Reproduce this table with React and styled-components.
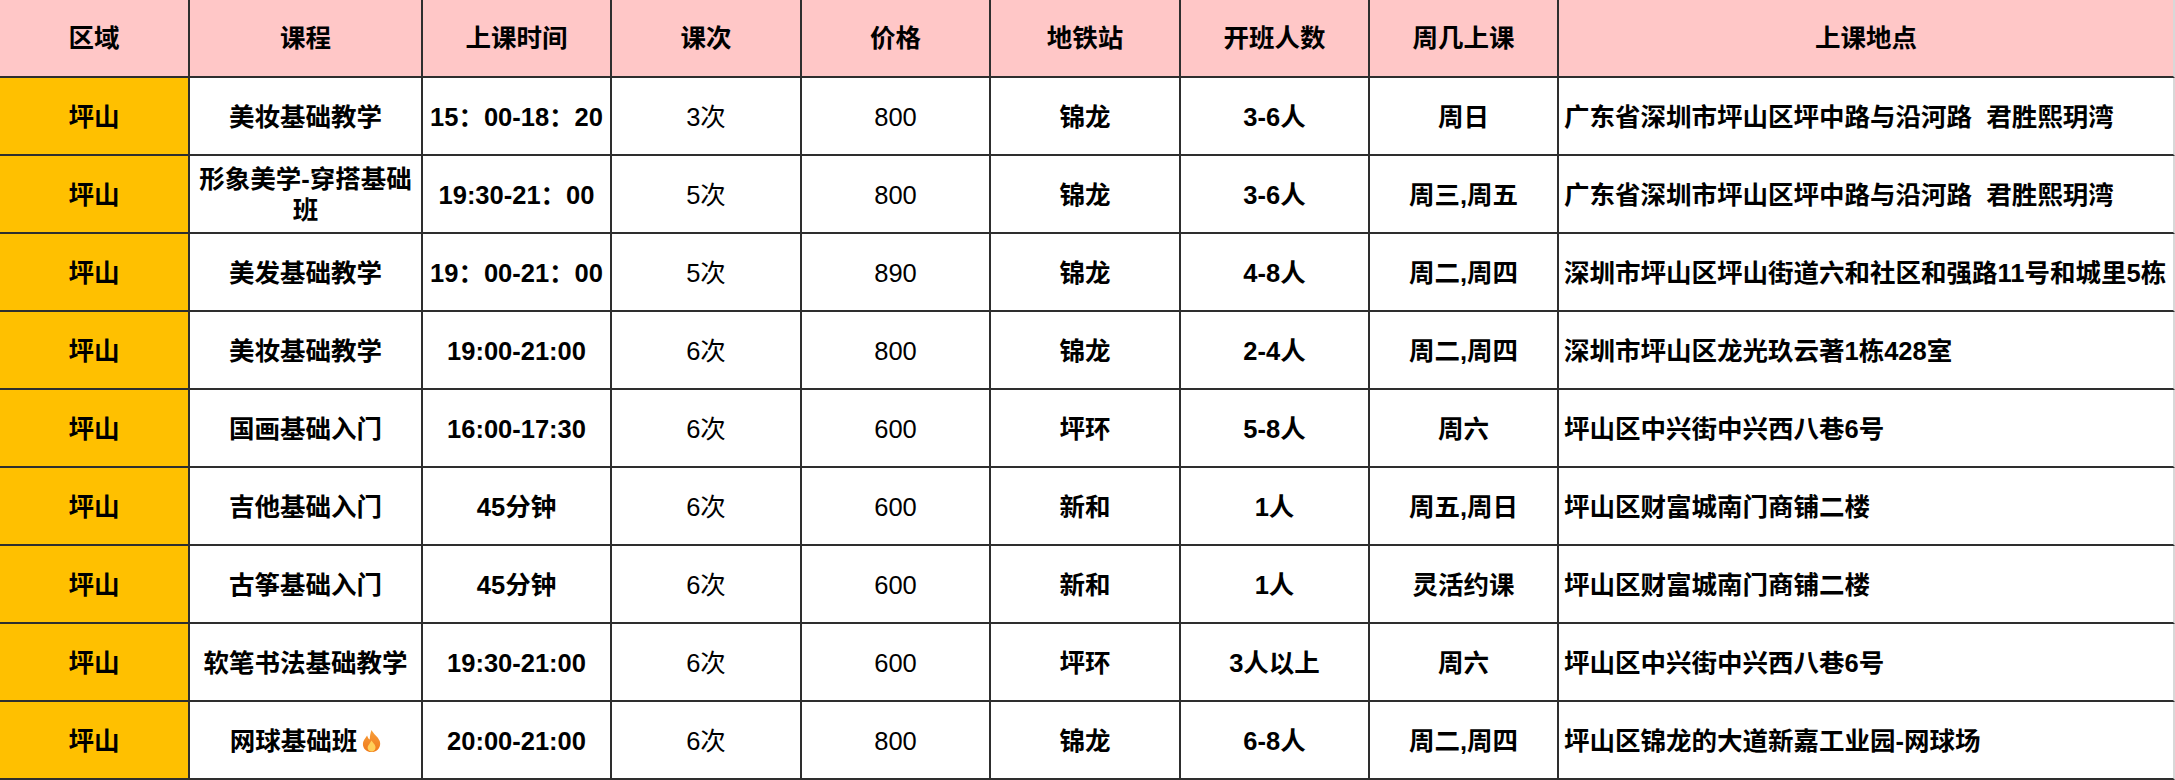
import React from 'react'
import styled, { createGlobalStyle } from 'styled-components'

const GlobalStyle = createGlobalStyle`
    html, body {
        margin: 0;
        padding: 0;
        background: #fff;
    }
    body {
        font-family: "Liberation Sans", "Noto Sans CJK SC", sans-serif;
        color: #000;
    }
`

const Table = styled.div`
    width: 2175px;
    height: 780px;
    display: grid;
    grid-template-columns: 190px 233px 189px 190px 189px 190px 189px 189px 1fr;
    grid-auto-rows: 78px;
    overflow: hidden;
`

const Cell = styled.div`
    box-sizing: border-box;
    display: flex;
    align-items: center;
    justify-content: ${(p) => (p.left ? 'flex-start' : 'center')};
    text-align: ${(p) => (p.left ? 'left' : 'center')};
    padding: ${(p) => (p.left ? '2px 0 0 5px' : '2px 3px 0')};
    border-right: 2px solid ${(p) => (p.last ? '#d8d8d8' : '#2e2e2e')};
    border-bottom: 2px solid #2e2e2e;
    background: ${(p) => p.bg || '#fff'};
    font-size: 25.5px;
    line-height: 31px;
    font-weight: ${(p) => (p.light ? 400 : 700)};
    white-space: ${(p) => (p.left ? 'nowrap' : 'normal')};
`

const HeadCell = styled(Cell)`
    background: #ffc7c7;
    font-weight: 700;
    padding-top: 0;
`

const Flame = styled.svg`
    display: inline-block;
    width: 19px;
    height: 24px;
    margin-left: 5px;
    vertical-align: -3px;
`

const FlameIcon = () => (
    <Flame viewBox="0 0 18 22">
        <defs>
            <linearGradient id="fl" x1="0" y1="0" x2="0" y2="1">
                <stop offset="0" stopColor="#f7a03a" />
                <stop offset="1" stopColor="#f0781c" />
            </linearGradient>
        </defs>
        <path
            d="M9 0.5 C10.5 4 15 6.5 16.8 11 C18.6 16.5 14.5 21.5 9 21.5 C3.5 21.5 -0.5 16.8 1.3 11.5 C2.2 9 4 7.5 4.8 5.8 C5.6 8 6.3 9 7.3 9.6 C7.5 6.5 7.8 3.5 9 0.5 Z"
            fill="url(#fl)"
        />
        <path
            d="M9 10.5 C10.5 13 13 14.5 12.8 17.3 C12.6 19.6 11 21 9 21 C7 21 5.3 19.6 5.3 17.5 C5.3 15 7.7 13.5 9 10.5 Z"
            fill="#ffcf5a"
        />
    </Flame>
)

const headers = ['区域', '课程', '上课时间', '课次', '价格', '地铁站', '开班人数', '周几上课', '上课地点']

const rows = [
    ['美妆基础教学', '15：00-18：20', '3次', '800', '锦龙', '3-6人', '周日', '广东省深圳市坪山区坪中路与沿河路\u00a0\u00a0君胜熙玥湾'],
    ['形象美学-穿搭基础班', '19:30-21：00', '5次', '800', '锦龙', '3-6人', '周三,周五', '广东省深圳市坪山区坪中路与沿河路\u00a0\u00a0君胜熙玥湾'],
    ['美发基础教学', '19：00-21：00', '5次', '890', '锦龙', '4-8人', '周二,周四', '深圳市坪山区坪山街道六和社区和强路11号和城里5栋'],
    ['美妆基础教学', '19:00-21:00', '6次', '800', '锦龙', '2-4人', '周二,周四', '深圳市坪山区龙光玖云著1栋428室'],
    ['国画基础入门', '16:00-17:30', '6次', '600', '坪环', '5-8人', '周六', '坪山区中兴街中兴西八巷6号'],
    ['吉他基础入门', '45分钟', '6次', '600', '新和', '1人', '周五,周日', '坪山区财富城南门商铺二楼'],
    ['古筝基础入门', '45分钟', '6次', '600', '新和', '1人', '灵活约课', '坪山区财富城南门商铺二楼'],
    ['软笔书法基础教学', '19:30-21:00', '6次', '600', '坪环', '3人以上', '周六', '坪山区中兴街中兴西八巷6号'],
    ['网球基础班', '20:00-21:00', '6次', '800', '锦龙', '6-8人', '周二,周四', '坪山区锦龙的大道新嘉工业园-网球场', true],
]

const App = () => {
    return (
        <>
            <GlobalStyle />
            <Table>
                {headers.map((h, i) => (
                    <HeadCell key={h} last={i === headers.length - 1}>{h}</HeadCell>
                ))}
                {rows.map((r, idx) => (
                    <React.Fragment key={idx}>
                        <Cell bg="#ffc000">坪山</Cell>
                        <Cell>
                            <span>
                                {r[0]}
                                {r[8] && <FlameIcon />}
                            </span>
                        </Cell>
                        <Cell>{r[1]}</Cell>
                        <Cell light>{r[2]}</Cell>
                        <Cell light>{r[3]}</Cell>
                        <Cell>{r[4]}</Cell>
                        <Cell>{r[5]}</Cell>
                        <Cell>{r[6]}</Cell>
                        <Cell left last>{r[7]}</Cell>
                    </React.Fragment>
                ))}
            </Table>
        </>
    )
}

export default App
